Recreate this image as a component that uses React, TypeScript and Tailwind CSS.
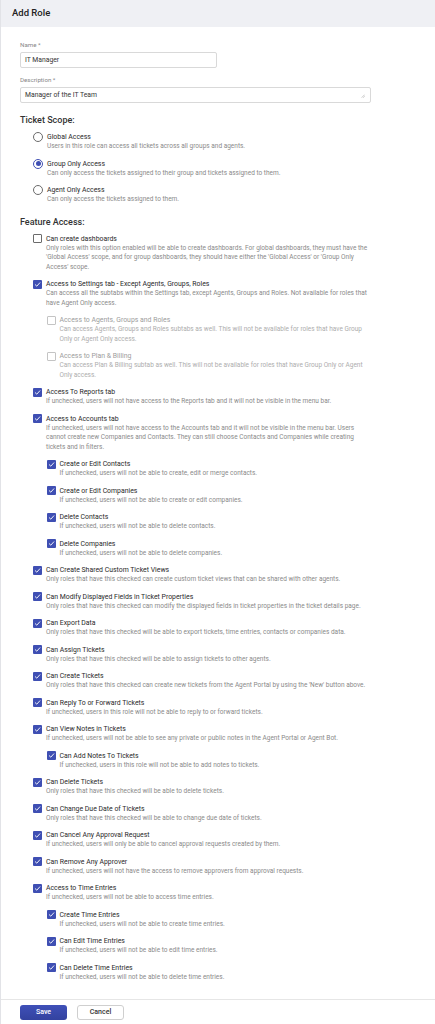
import { Fragment } from 'react'

type Item = {
    label: string
    desc: string
    checked?: boolean
    disabled?: boolean
    children?: Item[]
}

const features: Item[] = [
    {
        label: 'Can create dashboards',
        desc: "Only roles with this option enabled will be able to create dashboards. For global dashboards, they must have the 'Global Access' scope, and for group dashboards, they should have either the 'Global Access' or 'Group Only Access' scope.",
    },
    {
        label: 'Access to Settings tab - Except Agents, Groups, Roles',
        desc: 'Can access all the subtabs within the Settings tab, except Agents, Groups and Roles. Not available for roles that have Agent Only access.',
        checked: true,
        children: [
            {
                label: 'Access to Agents, Groups and Roles',
                desc: 'Can access Agents, Groups and Roles subtabs as well. This will not be available for roles that have Group Only or Agent Only access.',
                disabled: true,
            },
            {
                label: 'Access to Plan & Billing',
                desc: 'Can access Plan & Billing subtab as well. This will not be available for roles that have Group Only or Agent Only access.',
                disabled: true,
            },
        ],
    },
    {
        label: 'Access To Reports tab',
        desc: 'If unchecked, users will not have access to the Reports tab and it will not be visible in the menu bar.',
        checked: true,
    },
    {
        label: 'Access to Accounts tab',
        desc: 'If unchecked, users will not have access to the Accounts tab and it will not be visible in the menu bar. Users cannot create new Companies and Contacts. They can still choose Contacts and Companies while creating tickets and in filters.',
        checked: true,
        children: [
            { label: 'Create or Edit Contacts', desc: 'If unchecked, users will not be able to create, edit or merge contacts.', checked: true },
            { label: 'Create or Edit Companies', desc: 'If unchecked, users will not be able to create or edit companies.', checked: true },
            { label: 'Delete Contacts', desc: 'If unchecked, users will not be able to delete contacts.', checked: true },
            { label: 'Delete Companies', desc: 'If unchecked, users will not be able to delete companies.', checked: true },
        ],
    },
    {
        label: 'Can Create Shared Custom Ticket Views',
        desc: 'Only roles that have this checked can create custom ticket views that can be shared with other agents.',
        checked: true,
    },
    {
        label: 'Can Modify Displayed Fields in Ticket Properties',
        desc: 'Only roles that have this checked can modify the displayed fields in ticket properties in the ticket details page.',
        checked: true,
    },
    {
        label: 'Can Export Data',
        desc: 'Only roles that have this checked will be able to export tickets, time entries, contacts or companies data.',
        checked: true,
    },
    {
        label: 'Can Assign Tickets',
        desc: 'Only roles that have this checked will be able to assign tickets to other agents.',
        checked: true,
    },
    {
        label: 'Can Create Tickets',
        desc: "Only roles that have this checked can create new tickets from the Agent Portal by using the 'New' button above.",
        checked: true,
    },
    {
        label: 'Can Reply To or Forward Tickets',
        desc: 'If unchecked, users in this role will not be able to reply to or forward tickets.',
        checked: true,
    },
    {
        label: 'Can View Notes in Tickets',
        desc: 'If unchecked, users will not be able to see any private or public notes in the Agent Portal or Agent Bot.',
        checked: true,
        children: [
            { label: 'Can Add Notes To Tickets', desc: 'If unchecked, users in this role will not be able to add notes to tickets.', checked: true },
        ],
    },
    {
        label: 'Can Delete Tickets',
        desc: 'Only roles that have this checked will be able to delete tickets.',
        checked: true,
    },
    {
        label: 'Can Change Due Date of Tickets',
        desc: 'Only roles that have this checked will be able to change due date of tickets.',
        checked: true,
    },
    {
        label: 'Can Cancel Any Approval Request',
        desc: 'If unchecked, users will only be able to cancel approval requests created by them.',
        checked: true,
    },
    {
        label: 'Can Remove Any Approver',
        desc: 'If unchecked, users will not have the access to remove approvers from approval requests.',
        checked: true,
    },
    {
        label: 'Access to Time Entries',
        desc: 'If unchecked, users will not be able to access time entries.',
        checked: true,
        children: [
            { label: 'Create Time Entries', desc: 'If unchecked, users will not be able to create time entries.', checked: true },
            { label: 'Can Edit Time Entries', desc: 'If unchecked, users will not be able to edit time entries.', checked: true },
            { label: 'Can Delete Time Entries', desc: 'If unchecked, users will not be able to delete time entries.', checked: true },
        ],
    },
]

const scopes = [
    { label: 'Global Access', desc: 'Users in this role can access all tickets across all groups and agents.' },
    { label: 'Group Only Access', desc: 'Can only access the tickets assigned to their group and tickets assigned to them.', selected: true },
    { label: 'Agent Only Access', desc: 'Can only access the tickets assigned to them.' },
]

function Checkbox({ checked, disabled }: { checked?: boolean; disabled?: boolean }) {
    if (checked) {
        return (
            <span className="mt-[0.5px] flex h-[9px] w-[9px] shrink-0 items-center justify-center rounded-[1px] bg-[#3f4fb3]">
                <svg viewBox="0 0 10 10" className="h-[7px] w-[7px]">
                    <polyline points="1.8,5.3 4,7.4 8.3,2.6" fill="none" stroke="white" strokeWidth="1.3" strokeLinecap="round" strokeLinejoin="round" />
                </svg>
            </span>
        )
    }
    return (
        <span
            className={
                disabled
                    ? 'mt-[0.5px] h-[9px] w-[9px] shrink-0 rounded-[1px] border border-[#c4c4c4] bg-white'
                    : 'mt-[0.5px] h-[9px] w-[9px] shrink-0 rounded-[1px] border border-[#6b6b6b] bg-white'
            }
        />
    )
}

function FeatureRow({ item }: { item: Item }) {
    return (
        <div className="flex gap-[4px]">
            <Checkbox checked={item.checked} disabled={item.disabled} />
            <div className="flex flex-col">
                <span className={item.disabled ? 'text-[6.9px] leading-[10px] text-[#9d9d9d]' : 'text-[6.9px] leading-[10px] text-[#2a2a2a]'}>
                    {item.label}
                </span>
                <span className={item.disabled ? 'text-[6.5px] leading-[9.5px] text-[#adadad]' : 'text-[6.5px] leading-[9.5px] text-[#8a8a8a]'}>
                    {item.desc}
                </span>
            </div>
        </div>
    )
}

export default function App() {
    return (
        <div className="flex min-h-[1024px] w-[435px] flex-col border-l border-[#e2e3e7] bg-white font-['Roboto',sans-serif]">
            {/* header */}
            <div className="flex h-[27px] items-center bg-[#eff0f4] px-[11px]">
                <h1 className="text-[9.5px] font-medium text-[#222]">Add Role</h1>
            </div>

            {/* form body */}
            <div className="flex flex-col pl-[19px] pt-[14px] pb-[17px]">
                <label className="text-[6.2px] leading-[9px] text-[#888]">Name *</label>
                <div className="mt-[2px] flex h-[16px] w-[197px] items-center rounded-[2px] border border-[#d9d9d9] px-[4px] text-[6.8px] text-[#333]">
                    IT Manager
                </div>

                <label className="mt-[8px] text-[6.2px] leading-[9px] text-[#888]">Description *</label>
                <div className="relative mt-[2px] flex h-[16px] w-[351px] items-center rounded-[2px] border border-[#d9d9d9] px-[4px] text-[6.8px] text-[#333]">
                    Manager of the IT Team
                    <svg viewBox="0 0 6 6" className="absolute right-[5px] bottom-[4px] h-[4px] w-[4px]">
                        <path d="M5.5 1 L1 5.5 M5.5 3.5 L3.5 5.5" stroke="#999" strokeWidth="0.8" />
                    </svg>
                </div>

                <h2 className="mt-[11px] text-[9px] leading-[12px] font-medium text-[#333]">Ticket Scope:</h2>
                <div className="mt-[6px] flex flex-col gap-[7px] pl-[13px]">
                    {scopes.map((s) => (
                        <div key={s.label} className="flex gap-[4px]">
                            <span
                                className={
                                    s.selected
                                        ? 'flex h-[10px] w-[10px] shrink-0 items-center justify-center rounded-full border border-[#3f4fb3]'
                                        : 'h-[10px] w-[10px] shrink-0 rounded-full border border-[#6b6b6b]'
                                }
                            >
                                {s.selected && <span className="h-[5px] w-[5px] rounded-full bg-[#3f4fb3]" />}
                            </span>
                            <div className="flex flex-col">
                                <span className="text-[6.9px] leading-[10px] text-[#2a2a2a]">{s.label}</span>
                                <span className="text-[6.5px] leading-[9.5px] text-[#8a8a8a]">{s.desc}</span>
                            </div>
                        </div>
                    ))}
                </div>

                <h2 className="mt-[11px] text-[9px] leading-[12px] font-medium text-[#333]">Feature Access:</h2>
                <div className="mt-[6px] flex w-[351px] flex-col gap-[7px] pl-[13px]">
                    {features.map((f) => (
                        <Fragment key={f.label}>
                            <FeatureRow item={f} />
                            {f.children && (
                                <div className="flex flex-col gap-[7px] pl-[13.5px]">
                                    {f.children.map((c) => (
                                        <FeatureRow key={c.label} item={c} />
                                    ))}
                                </div>
                            )}
                        </Fragment>
                    ))}
                </div>
            </div>

            {/* footer */}
            <div className="flex gap-[10px] border-t border-[#e6e6e6] px-[19px] pt-[5px] pb-[5px]">
                <button className="h-[15px] w-[47px] rounded-[3px] bg-gradient-to-b from-[#3f50b8] to-[#33429f] text-[7px] font-medium text-white">
                    Save
                </button>
                <button className="h-[15px] w-[47px] rounded-[3px] border border-[#cfcfcf] bg-white text-[7px] font-medium text-[#333]">
                    Cancel
                </button>
            </div>
        </div>
    )
}
